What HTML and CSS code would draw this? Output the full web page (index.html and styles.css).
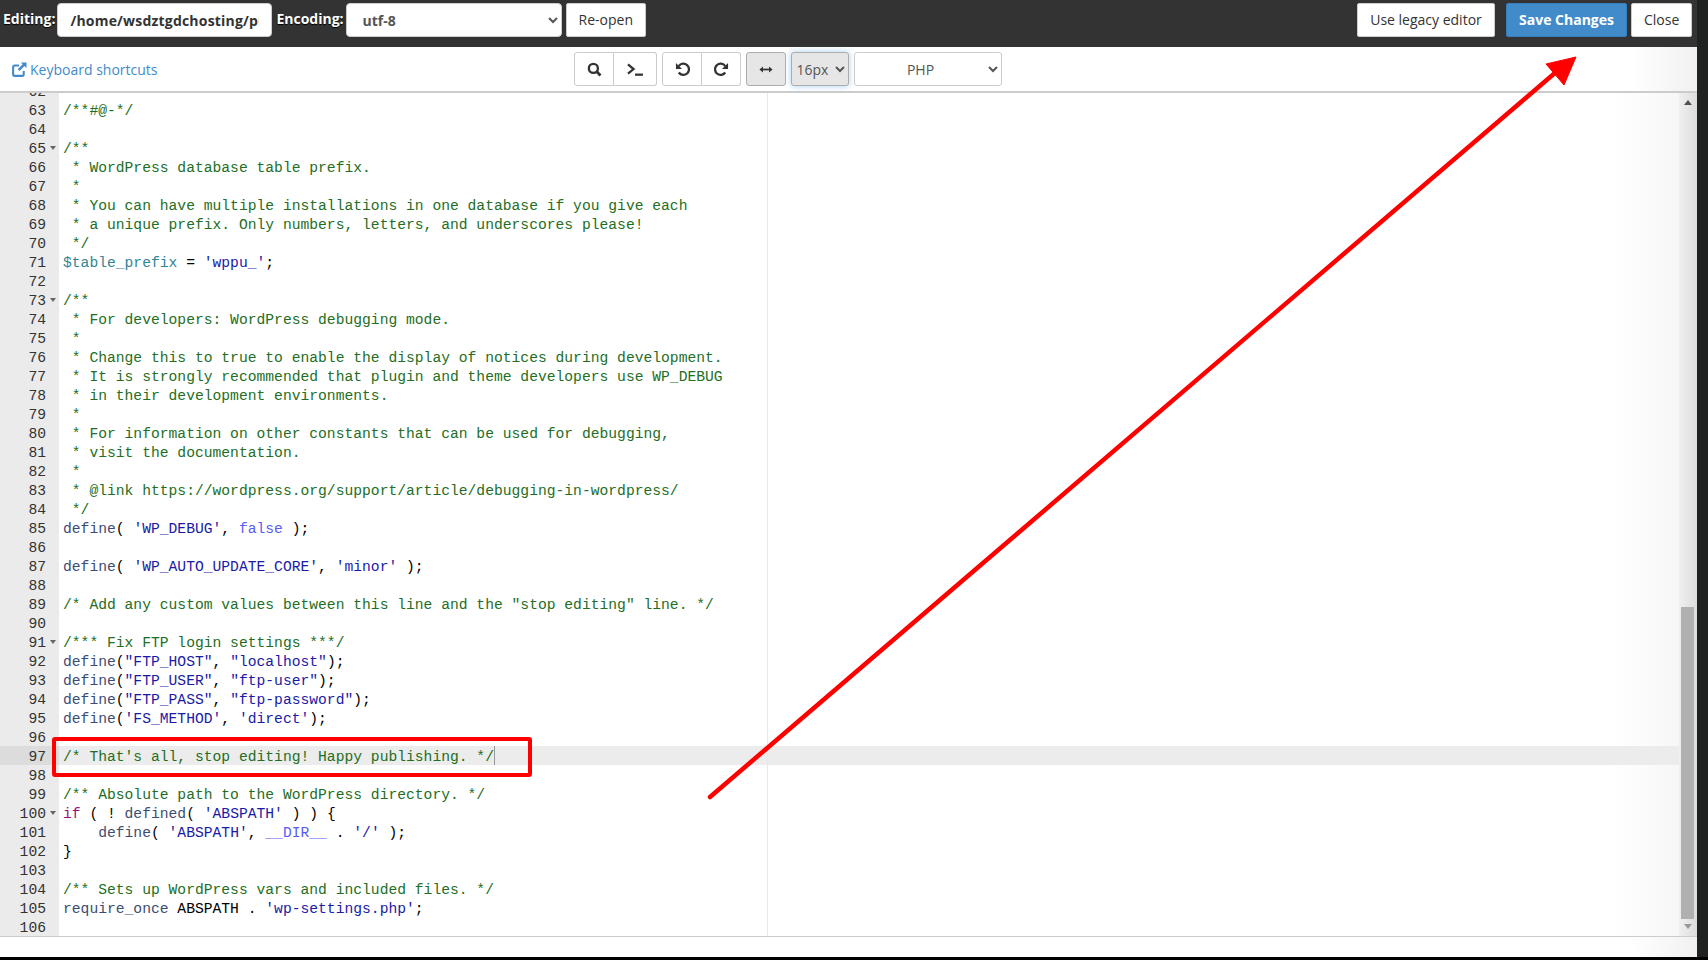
FILE: index.html
```html
<!DOCTYPE html>
<html lang="en">
<head>
	<meta charset="UTF-8">
	<title>File editor</title>
	<link rel="stylesheet" href="styles.css">
</head>
<body>
<div class="screen">
	<div class="app">
		<!-- top bar -->
		<header class="topbar">
			<label class="bar-label">Editing:</label>
			<input class="path-input" type="text" value="/home/wsdztgdchosting/public_html/wp-config.php" readonly>
			<label class="bar-label">Encoding:</label>
			<select class="encoding"><option>utf-8</option></select>
			<button class="btn">Re-open</button>
			<div class="bar-right">
				<button class="btn btn-legacy">Use legacy editor</button>
				<button class="btn btn-save">Save Changes</button>
				<button class="btn btn-close">Close</button>
			</div>
		</header>

		<!-- toolbar -->
		<div class="toolbar">
			<a class="shortcuts" href="#">
				<svg class="ext-icon" viewBox="0 0 16 16"><path d="M12.500 9.500V13a1.800 1.800 0 0 1-1.800 1.800H3A1.800 1.800 0 0 1 1.200 13V5.500A1.800 1.800 0 0 1 3 3.700h4.500" fill="none" stroke="#428bca" stroke-width="2.200"/><path d="M9.500 .5H15.500v6l-2.200-2.200-5.300 5.300-1.900-1.900 5.300-5.300z" fill="#428bca"/></svg>
				Keyboard shortcuts
			</a>
			<div class="tools">
				<div class="tool-group">
					<button class="tool tool-search"><svg viewBox="0 0 16 16"><circle cx="6.800" cy="6.800" r="4.800" fill="none" stroke="#333" stroke-width="2.500"/><path d="M10.200 10.200 14.400 14.400" stroke="#333" stroke-width="3"/></svg></button>
					<button class="tool tool-term"><svg viewBox="0 0 18 16"><path d="M1.500 2.500 7.500 7.500 1.500 12.500" fill="none" stroke="#333" stroke-width="2.400"/><path d="M9 13.500h8.500" stroke="#333" stroke-width="2.400"/></svg></button>
				</div>
				<div class="tool-group">
					<button class="tool tool-undo"><svg viewBox="0 0 16 16"><path d="M4 11.200A6 6 0 1 0 4 4.300" fill="none" stroke="#333" stroke-width="2.400"/><path d="M1 1 1 7.500 7.500 7.500z" fill="#333"/></svg></button>
					<button class="tool tool-redo"><svg viewBox="0 0 16 16"><path d="M12 11.200A6 6 0 1 1 12 4.300" fill="none" stroke="#333" stroke-width="2.400"/><path d="M15 1 15 7.500 8.500 7.500z" fill="#333"/></svg></button>
				</div>
				<button class="tool tool-wrap"><svg viewBox="0 0 16 10"><path d="M3 5h10" stroke="#333" stroke-width="2"/><path d="M0.500 5 4.500 1.500V8.500zM15.500 5 11.500 1.500V8.500z" fill="#333"/></svg></button>
				<select class="font-size"><option>16px</option></select>
				<select class="mode"><option>PHP</option></select>
			</div>
		</div>

		<!-- code area -->
		<div class="editor">
			<div class="lines">
				<div class="row first"><span class="num">62</span><code></code></div>
				<div class="row"><span class="num">63</span><code class="c">/**#@-*/</code></div>
				<div class="row"><span class="num">64</span><code></code></div>
				<div class="row"><span class="num fold">65</span><code class="c">/**</code></div>
				<div class="row"><span class="num">66</span><code class="c"> * WordPress database table prefix.</code></div>
				<div class="row"><span class="num">67</span><code class="c"> *</code></div>
				<div class="row"><span class="num">68</span><code class="c"> * You can have multiple installations in one database if you give each</code></div>
				<div class="row"><span class="num">69</span><code class="c"> * a unique prefix. Only numbers, letters, and underscores please!</code></div>
				<div class="row"><span class="num">70</span><code class="c"> */</code></div>
				<div class="row"><span class="num">71</span><code><i class="v">$table_prefix</i> = <i class="s">'wppu_'</i>;</code></div>
				<div class="row"><span class="num">72</span><code></code></div>
				<div class="row"><span class="num fold">73</span><code class="c">/**</code></div>
				<div class="row"><span class="num">74</span><code class="c"> * For developers: WordPress debugging mode.</code></div>
				<div class="row"><span class="num">75</span><code class="c"> *</code></div>
				<div class="row"><span class="num">76</span><code class="c"> * Change this to true to enable the display of notices during development.</code></div>
				<div class="row"><span class="num">77</span><code class="c"> * It is strongly recommended that plugin and theme developers use WP_DEBUG</code></div>
				<div class="row"><span class="num">78</span><code class="c"> * in their development environments.</code></div>
				<div class="row"><span class="num">79</span><code class="c"> *</code></div>
				<div class="row"><span class="num">80</span><code class="c"> * For information on other constants that can be used for debugging,</code></div>
				<div class="row"><span class="num">81</span><code class="c"> * visit the documentation.</code></div>
				<div class="row"><span class="num">82</span><code class="c"> *</code></div>
				<div class="row"><span class="num">83</span><code class="c"> * @link https://wordpress.org/support/article/debugging-in-wordpress/</code></div>
				<div class="row"><span class="num">84</span><code class="c"> */</code></div>
				<div class="row"><span class="num">85</span><code><i class="f">define</i>( <i class="s">'WP_DEBUG'</i>, <i class="l">false</i> );</code></div>
				<div class="row"><span class="num">86</span><code></code></div>
				<div class="row"><span class="num">87</span><code><i class="f">define</i>( <i class="s">'WP_AUTO_UPDATE_CORE'</i>, <i class="s">'minor'</i> );</code></div>
				<div class="row"><span class="num">88</span><code></code></div>
				<div class="row"><span class="num">89</span><code class="c">/* Add any custom values between this line and the "stop editing" line. */</code></div>
				<div class="row"><span class="num">90</span><code></code></div>
				<div class="row"><span class="num fold">91</span><code class="c">/*** Fix FTP login settings ***/</code></div>
				<div class="row"><span class="num">92</span><code><i class="f">define</i>(<i class="s">"FTP_HOST"</i>, <i class="s">"localhost"</i>);</code></div>
				<div class="row"><span class="num">93</span><code><i class="f">define</i>(<i class="s">"FTP_USER"</i>, <i class="s">"ftp-user"</i>);</code></div>
				<div class="row"><span class="num">94</span><code><i class="f">define</i>(<i class="s">"FTP_PASS"</i>, <i class="s">"ftp-password"</i>);</code></div>
				<div class="row"><span class="num">95</span><code><i class="f">define</i>(<i class="s">'FS_METHOD'</i>, <i class="s">'direct'</i>);</code></div>
				<div class="row"><span class="num">96</span><code></code></div>
				<div class="row active"><span class="num">97</span><code class="c">/* That's all, stop editing! Happy publishing. */<b class="cursor"></b></code></div>
				<div class="row"><span class="num">98</span><code></code></div>
				<div class="row"><span class="num">99</span><code class="c">/** Absolute path to the WordPress directory. */</code></div>
				<div class="row"><span class="num fold">100</span><code><i class="k">if</i> ( ! <i class="f">defined</i>( <i class="s">'ABSPATH'</i> ) ) {</code></div>
				<div class="row"><span class="num">101</span><code>    <i class="f">define</i>( <i class="s">'ABSPATH'</i>, <i class="l">__DIR__</i> . <i class="s">'/'</i> );</code></div>
				<div class="row"><span class="num">102</span><code>}</code></div>
				<div class="row"><span class="num">103</span><code></code></div>
				<div class="row"><span class="num">104</span><code class="c">/** Sets up WordPress vars and included files. */</code></div>
				<div class="row"><span class="num">105</span><code><i class="f">require_once</i> ABSPATH . <i class="s">'wp-settings.php'</i>;</code></div>
				<div class="row"><span class="num">106</span><code></code></div>
			</div>
			<div class="scrollbar">
				<span class="arrow-up"></span>
				<div class="thumb"></div>
				<span class="arrow-down"></span>
			</div>
		</div>

		<div class="statusbar"></div>
	</div>
	<div class="side"></div>

	<!-- red marks drawn on the screenshot -->
	<svg class="marks" viewBox="0 0 1708 960">
		<rect x="54" y="739" width="476" height="36" rx="1" fill="none" stroke="#f00" stroke-width="4"/>
		<path d="M710 797 1556 72" stroke="#f00" stroke-width="4.500" stroke-linecap="round"/>
		<path d="M1576 57 1546 64 1564 85z" fill="#f00" stroke="#f00" stroke-width="1" stroke-linejoin="round"/>
	</svg>
</div>
</body>
</html>
```

FILE: styles.css
```css
* {
	box-sizing: border-box;
}

body {
	margin: 0;
	background: #000;
	font-family: "Open Sans", sans-serif;
	font-size: 14px;
	color: #333;
	overflow: hidden;
}

.screen {
	position: relative;
	display: flex;
	height: 957px;
}

.app {
	width: 1697px;
	display: flex;
	flex-direction: column;
	background: #fff;
}

.side {
	flex: 1;
	background: #202222;
}

/* top bar */
.topbar {
	height: 47px;
	flex: none;
	display: flex;
	align-items: flex-start;
	padding: 3px 5px 0 3px;
	background: #333;
}

.bar-label {
	color: #fff;
	font-weight: 700;
	line-height: 32px;
	margin-right: 2px;
	text-shadow: 0 1px 1px #000;
}

.path-input {
	width: 215px;
	height: 34px;
	margin-right: 4px;
	padding: 0 12px;
	border: 1px solid #ccc;
	border-radius: 4px;
	font: 700 14px "Open Sans", sans-serif;
	letter-spacing: .2px;
	color: #333;
}

.encoding {
	width: 216px;
	height: 34px;
	margin-right: 4px;
	padding: 0 12px;
	border: 1px solid #ccc;
	border-radius: 4px;
	background: #fff;
	font: 700 14px "Open Sans", sans-serif;
	color: #555;
}

.btn {
	height: 34px;
	padding: 0 12px 2px;
	border: 1px solid #ccc;
	border-radius: 2px;
	background: #fff;
	font: 14px "Open Sans", sans-serif;
	color: #333;
}

.bar-right {
	margin-left: auto;
	display: flex;
}

.btn-legacy {
	width: 138px;
	margin-right: 11px;
}

.btn-save {
	width: 121px;
	margin-right: 4px;
	background: #428bca;
	border-color: #357ebd;
	color: #fff;
	font-weight: 700;
}

.btn-close {
	width: 61px;
}

/* toolbar */
.toolbar {
	height: 46px;
	flex: none;
	position: relative;
	display: flex;
	align-items: center;
	padding: 0 0 0 12px;
	border-bottom: 2px solid #ccc;
	background: linear-gradient(90deg, #fff 96%, #f1f1f1);
}

.shortcuts {
	display: flex;
	align-items: center;
	gap: 3px;
	color: #428bca;
	text-decoration: none;
}

.ext-icon {
	width: 15px;
	height: 15px;
}

.tools {
	display: flex;
	gap: 5px;
	margin-left: 417px;
}

.tool-group {
	display: flex;
}

.tool {
	height: 34px;
	display: flex;
	align-items: center;
	justify-content: center;
	padding: 0;
	border: 1px solid #ccc;
	background: #fff;
}

.tool-group .tool:first-child {
	border-radius: 3px 0 0 3px;
}

.tool-group .tool:last-child {
	border-left: 0;
	border-radius: 0 3px 3px 0;
}

.tool-search {
	width: 40px;
}

.tool-search svg {
	width: 15px;
	height: 15px;
}

.tool-term {
	width: 43px;
}

.tool-term svg {
	width: 18px;
	height: 15px;
}

.tool-undo {
	width: 40px;
}

.tool-redo {
	width: 39px;
}

.tool-undo svg,
.tool-redo svg {
	width: 15px;
	height: 15px;
}

.tool-wrap {
	width: 40px;
	background: #e6e6e6;
	border-color: #adadad;
	border-radius: 3px;
}

.tool-wrap svg {
	width: 14px;
	height: 9px;
}

.font-size {
	width: 58px;
	height: 34px;
	padding: 0;
	border: 1px solid #adadad;
	border-radius: 3px;
	background: #e6e6e6;
	box-shadow: 0 0 6px rgba(102, 175, 233, .6);
	font: 14px "Open Sans", sans-serif;
	color: #555;
}

.mode {
	width: 148px;
	height: 34px;
	padding-right: 4px;
	border: 1px solid #ccc;
	border-radius: 3px;
	background: #fff;
	text-align: center;
	font: 14px "Open Sans", sans-serif;
	color: #555;
}

/* code area */
.editor {
	flex: none;
	height: 844px;
	display: flex;
	overflow: hidden;
	border-bottom: 1px solid #ccc;
}

.lines {
	flex: 1;
	position: relative;
	overflow: hidden;
	background: linear-gradient(90deg, #fff 96%, #f7f7f7);
}

/* print margin */
.lines::after {
	content: "";
	position: absolute;
	top: 0;
	bottom: 0;
	left: 767px;
	width: 1px;
	background: #e8e8e8;
}

.row {
	height: 19px;
	display: flex;
	line-height: 23px;
	white-space: pre;
}

.first {
	margin-top: -12px;
}

.num {
	width: 59px;
	height: 19px;
	flex: none;
	position: relative;
	padding-right: 13px;
	text-align: right;
	background: #ebebeb;
	font-family: "Liberation Mono", monospace;
	font-size: 14.67px;
	color: #333;
}

.fold::after {
	content: "";
	position: absolute;
	left: 50px;
	top: 8px;
	border: 3px solid transparent;
	border-top: 4px solid #666;
	border-bottom: 0;
}

code {
	padding-left: 4px;
	font-family: "Liberation Mono", monospace;
	font-size: 14.67px;
	color: #000;
}

code i {
	font-style: normal;
}

.c { color: #236e24; }
.f { color: #3c4c72; }
.s { color: #1a1aa6; }
.k { color: #930f80; }
.l { color: #585cf6; }
.v { color: #318495; }

.active {
	background: #ececec;
}

.active .num {
	background: #dcdcdc;
}

.cursor {
	display: inline-block;
	width: 1px;
	height: 19px;
	vertical-align: top;
	background: #999;
}

/* scrollbar */
.scrollbar {
	width: 18px;
	flex: none;
	display: flex;
	flex-direction: column;
	align-items: center;
	padding: 0 1px 0 0;
	background: linear-gradient(90deg, #f0f0f0, #dcdcdc);
}

.arrow-up {
	margin-top: 7px;
	border: 4px solid transparent;
	border-top: 0;
	border-bottom: 5px solid #505050;
}

.thumb {
	width: 13px;
	height: 312px;
	margin-top: auto;
	background: #b0b0b0;
}

.arrow-down {
	margin: 5px 0 7px;
	border: 4px solid transparent;
	border-bottom: 0;
	border-top: 5px solid #999;
}

.statusbar {
	flex: 1;
	background: linear-gradient(90deg, #fff 96%, #f1f1f1);
}

.marks {
	position: absolute;
	left: 0;
	top: 0;
	width: 1708px;
	height: 960px;
	pointer-events: none;
}
```
